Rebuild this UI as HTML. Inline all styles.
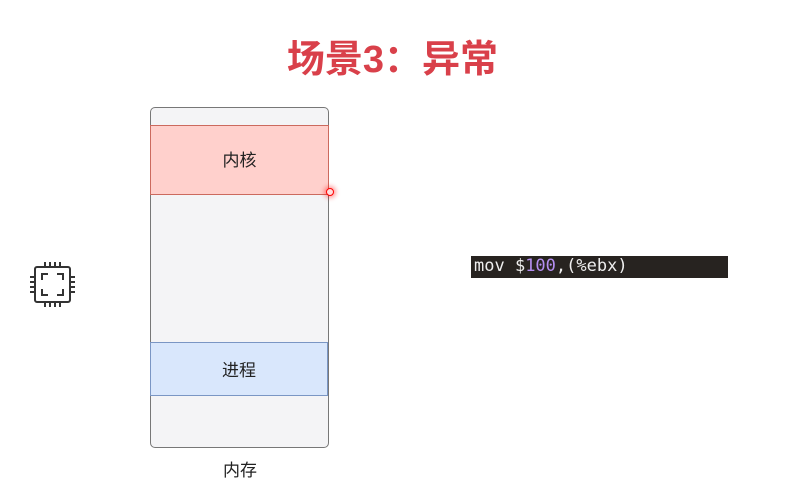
<!DOCTYPE html>
<html><head><meta charset="utf-8"><style>
body{margin:0;width:785px;height:487px;background:#fff;position:relative;overflow:hidden;font-family:"Liberation Sans","Noto Sans CJK SC",sans-serif}
.t{position:absolute;left:0;width:785px;top:28px;text-align:center;font-size:38px;font-weight:bold;color:#d9404a}
.mem{position:absolute;left:150px;top:107px;width:177px;height:339px;background:#f4f4f6;border:1.5px solid #777;border-radius:5px}
.k{position:absolute;left:150px;top:125px;width:177px;height:68px;background:#ffd0cc;border:1.5px solid #cc6a5e;text-align:center;line-height:70px;font-size:17px;color:#222;box-sizing:content-box}
.p{position:absolute;left:150px;top:342px;width:176px;height:52px;background:#d9e7fc;border:1.5px solid #7a96c4;text-align:center;line-height:56px;font-size:17px;color:#222}
.lb{position:absolute;left:150px;width:180px;top:456px;text-align:center;font-size:17px;color:#222}
.dot{position:absolute;left:326px;top:188px;width:6px;height:6px;border:1.5px solid #f00;border-radius:50%;background:#fdd;box-shadow:0 0 5px 2px rgba(255,0,0,.4)}
.code{position:absolute;left:471px;top:256px;width:257px;height:22px;background:#272320;color:#eee;font-family:"DejaVu Sans Mono","Liberation Mono",monospace;font-size:17px;line-height:21px;padding-left:3px;box-sizing:border-box}
.code b{font-weight:normal;color:#b48ef0}
</style></head><body>
<div class="t">场景3：异常</div>
<div class="mem"></div>
<div class="k">内核</div>
<div class="p">进程</div>
<div class="dot"></div>
<div class="lb">内存</div>
<div class="code">mov $<b>100</b>,(%ebx)</div>
<svg style="position:absolute;left:28px;top:260px" width="50" height="50" viewBox="0 0 50 50" fill="none" stroke="#333" stroke-width="2">
<rect x="7" y="7" width="35" height="35" rx="2"/>
<path d="M14 20V14h6M29 14h6v6M35 29v6h-6M20 35h-6v-6"/>
<path d="M17 2v5M22 2v5M27 2v5M32 2v5M17 42v5M22 42v5M27 42v5M32 42v5M2 17h5M2 22h5M2 27h5M2 32h5M42 17h5M42 22h5M42 27h5M42 32h5"/>
</svg>
</body></html>
